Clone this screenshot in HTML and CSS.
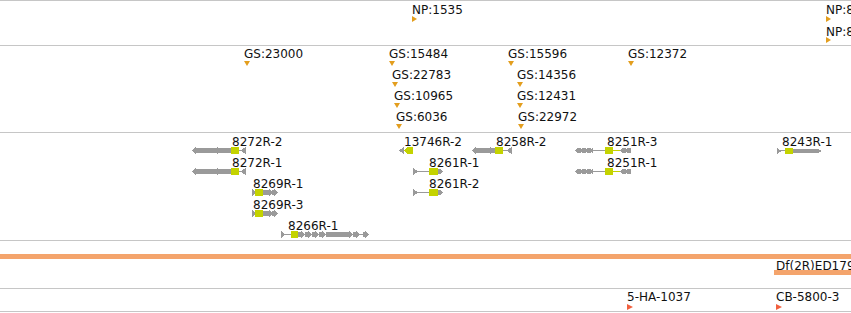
FILE: index.html
```html
<!DOCTYPE html>
<html lang="en">
<head>
<meta charset="UTF-8">
<title>Genome browser tracks</title>
<link rel="stylesheet" href="styles.css">
</head>
<body>

<div class="browser">
    <!-- NP track -->
    <div class="track track-np">
        <div class="lbl" style="left:412px;top:2px">NP:1535</div>
        <div class="mark-r gold" style="left:412px;top:15px"></div>
        <div class="lbl" style="left:826px;top:2px">NP:8491</div>
        <div class="mark-r gold" style="left:826px;top:15px"></div>
        <div class="lbl" style="left:826px;top:24px">NP:8512</div>
        <div class="mark-r gold" style="left:826px;top:36px"></div>
    </div>

    <!-- GS track -->
    <div class="track track-gs">
        <div class="lbl" style="left:244px;top:1px">GS:23000</div>
        <div class="mark-d" style="left:244px;top:15px"></div>

        <div class="lbl" style="left:389px;top:1px">GS:15484</div>
        <div class="mark-d" style="left:389px;top:15px"></div>
        <div class="lbl" style="left:392px;top:22px">GS:22783</div>
        <div class="mark-d" style="left:392px;top:36px"></div>
        <div class="lbl" style="left:394px;top:43px">GS:10965</div>
        <div class="mark-d" style="left:394px;top:57px"></div>
        <div class="lbl" style="left:396px;top:64px">GS:6036</div>
        <div class="mark-d" style="left:396px;top:78px"></div>

        <div class="lbl" style="left:508px;top:1px">GS:15596</div>
        <div class="mark-d" style="left:508px;top:15px"></div>
        <div class="lbl" style="left:517px;top:22px">GS:14356</div>
        <div class="mark-d" style="left:517px;top:36px"></div>
        <div class="lbl" style="left:517px;top:43px">GS:12431</div>
        <div class="mark-d" style="left:517px;top:57px"></div>
        <div class="lbl" style="left:518px;top:64px">GS:22972</div>
        <div class="mark-d" style="left:518px;top:78px"></div>

        <div class="lbl" style="left:628px;top:1px">GS:12372</div>
        <div class="mark-d" style="left:628px;top:15px"></div>
    </div>

    <!-- transcripts -->
    <div class="track track-tx">
        <div class="lbl" style="left:232px;top:2px">8272R-2</div>
        <svg class="glyph" style="left:192px;top:14px" width="54" height="7">
            <polygon class="ex" points="0,3.5 4,0 4,1 24,1 24,6 4,6 4,7"/>
            <polygon class="ex" points="22,3.5 26,0 26,1 39,1 39,6 26,6 26,7"/>
            <rect class="cds" x="39" y="0" width="8" height="7"/>
            <rect class="ex" x="47" y="3" width="2" height="1"/>
            <polygon class="ex" points="48,3.5 54,0 54,7"/>
        </svg>

        <div class="lbl" style="left:232px;top:23px">8272R-1</div>
        <svg class="glyph" style="left:192px;top:35px" width="54" height="7">
            <polygon class="ex" points="0,3.5 4,0 4,1 24,1 24,6 4,6 4,7"/>
            <polygon class="ex" points="22,3.5 26,0 26,1 39,1 39,6 26,6 26,7"/>
            <rect class="cds" x="39" y="0" width="8" height="7"/>
            <rect class="ex" x="47" y="3" width="2" height="1"/>
            <polygon class="ex" points="48,3.5 54,0 54,7"/>
        </svg>

        <div class="lbl" style="left:253px;top:44px">8269R-1</div>
        <svg class="glyph" style="left:252px;top:56px" width="26" height="7">
            <rect class="ex" x="0" y="0" width="1" height="7"/>
            <polygon class="ex" points="1,1 4,3.5 1,6"/>
            <rect class="cds" x="3" y="0" width="8" height="7"/>
            <polygon class="ex" points="11,1 17,1 17,0 21,3.5 17,7 17,6 11,6"/>
            <polygon class="ex" points="20,1 22,1 22,0 26,3.5 22,7 22,6 20,6"/>
        </svg>

        <div class="lbl" style="left:253px;top:65px">8269R-3</div>
        <svg class="glyph" style="left:252px;top:77px" width="26" height="7">
            <rect class="ex" x="0" y="0" width="1" height="7"/>
            <polygon class="ex" points="1,1 4,3.5 1,6"/>
            <rect class="cds" x="3" y="0" width="8" height="7"/>
            <polygon class="ex" points="11,1 17,1 17,0 21,3.5 17,7 17,6 11,6"/>
            <polygon class="ex" points="20,1 22,1 22,0 26,3.5 22,7 22,6 20,6"/>
        </svg>

        <div class="lbl" style="left:288px;top:86px">8266R-1</div>
        <svg class="glyph" style="left:281px;top:98px" width="88" height="7">
            <rect class="ex" x="0" y="0" width="1" height="7"/>
            <polygon class="ex" points="1,1 5,3.5 1,6"/>
            <rect class="ex" x="5" y="3" width="5" height="1"/>
            <rect class="cds" x="10" y="0" width="7" height="7"/>
            <polygon class="ex" points="17,1 20,1 20,0 24,3.5 20,7 20,6 17,6"/>
            <polygon class="ex" points="24,1 27,1 27,0 31,3.5 27,7 27,6 24,6"/>
            <polygon class="ex" points="31,1 34,1 34,0 38,3.5 34,7 34,6 31,6"/>
            <polygon class="ex" points="38,1 41,1 41,0 45,3.5 41,7 41,6 38,6"/>
            <rect class="ex" x="45" y="1" width="20" height="5"/>
            <polygon class="ex" points="65,1 68,1 68,0 72,3.5 68,7 68,6 65,6"/>
            <polygon class="ex" points="72,1 75,1 75,0 79,3.5 75,7 75,6 72,6"/>
            <rect class="ex" x="79" y="3" width="3" height="1"/>
            <polygon class="ex" points="82,1 84,1 84,0 88,3.5 84,7 84,6 82,6"/>
        </svg>

        <div class="lbl" style="left:404px;top:2px">13746R-2</div>
        <svg class="glyph" style="left:399px;top:14px" width="14" height="7">
            <polygon class="ex" points="0,3.5 5,0 5,7"/>
            <polygon class="cds" points="5,3.5 8,0 14,0 14,7 8,7"/>
        </svg>

        <div class="lbl" style="left:496px;top:2px">8258R-2</div>
        <svg class="glyph" style="left:472px;top:14px" width="41" height="7">
            <polygon class="ex" points="0,3.5 4,0 4,1 18,1 18,6 4,6 4,7"/>
            <polygon class="ex" points="15,3.5 19,0 19,1 23,1 23,6 19,6 19,7"/>
            <rect class="cds" x="23" y="0" width="8" height="7"/>
            <rect class="ex" x="31" y="3" width="3" height="1"/>
            <polygon class="ex" points="34,3.5 40,0 40,7"/>
        </svg>

        <div class="lbl" style="left:429px;top:23px">8261R-1</div>
        <svg class="glyph" style="left:413px;top:35px" width="31" height="7">
            <polygon class="ex" points="0,0 5,3.5 0,7"/>
            <rect class="ex" x="4" y="3" width="12" height="1"/>
            <rect class="cds" x="16" y="0" width="9" height="7"/>
            <polygon class="ex" points="25,1 27,1 30,3.5 27,6 25,6"/>
        </svg>

        <div class="lbl" style="left:429px;top:44px">8261R-2</div>
        <svg class="glyph" style="left:413px;top:56px" width="31" height="7">
            <polygon class="ex" points="0,0 5,3.5 0,7"/>
            <rect class="ex" x="4" y="3" width="12" height="1"/>
            <rect class="cds" x="16" y="0" width="9" height="7"/>
            <polygon class="ex" points="25,1 27,1 30,3.5 27,6 25,6"/>
        </svg>

        <div class="lbl" style="left:607px;top:2px">8251R-3</div>
        <svg class="glyph" style="left:575px;top:14px" width="56" height="7">
            <polygon class="ex" points="0,3.5 3,0 3,1 6,1 6,6 3,6 3,7"/>
            <polygon class="ex" points="5,3.5 8,0 8,1 11,1 11,6 8,6 8,7"/>
            <polygon class="ex" points="10,3.5 13,0 13,1 16,1 16,6 13,6 13,7"/>
            <polygon class="ex" points="15,3.5 18,0 18,7"/>
            <rect class="ex" x="18" y="3" width="12" height="1"/>
            <rect class="cds" x="30" y="0" width="8" height="7"/>
            <rect class="cds" x="38" y="3" width="7" height="1"/>
            <polygon class="ex" points="45,3.5 48,0 48,1 51,1 51,6 48,6 48,7"/>
            <polygon class="ex" points="50,3.5 53,0 53,1 56,1 56,6 53,6 53,7"/>
        </svg>

        <div class="lbl" style="left:607px;top:23px">8251R-1</div>
        <svg class="glyph" style="left:575px;top:35px" width="56" height="7">
            <polygon class="ex" points="0,3.5 3,0 3,1 6,1 6,6 3,6 3,7"/>
            <polygon class="ex" points="5,3.5 8,0 8,1 11,1 11,6 8,6 8,7"/>
            <polygon class="ex" points="10,3.5 13,0 13,1 16,1 16,6 13,6 13,7"/>
            <polygon class="ex" points="15,3.5 18,0 18,7"/>
            <rect class="ex" x="18" y="3" width="12" height="1"/>
            <rect class="cds" x="30" y="0" width="8" height="7"/>
            <rect class="cds" x="38" y="3" width="7" height="1"/>
            <polygon class="ex" points="45,3.5 48,0 48,1 51,1 51,6 48,6 48,7"/>
            <polygon class="ex" points="50,3.5 53,0 53,1 56,1 56,6 53,6 53,7"/>
        </svg>

        <div class="lbl" style="left:782px;top:2px">8243R-1</div>
        <svg class="glyph" style="left:777px;top:15px" width="46" height="6">
            <polygon class="ex" points="0,0 5,3 0,6"/>
            <rect class="ex" x="4" y="2" width="4" height="1"/>
            <rect class="cds" x="8" y="0" width="8" height="6"/>
            <polygon class="ex" points="16,1 41,1 45,3 41,5 16,5"/>
        </svg>
    </div>

    <!-- deficiencies -->
    <div class="track track-df">
        <div class="bar" style="left:0;top:13px;width:851px"></div>
        <div class="lbl" style="left:776px;top:18px">Df(2R)ED1791</div>
        <div class="bar" style="left:774px;top:29px;width:77px"></div>
    </div>

    <!-- insertions -->
    <div class="track track-ins">
        <div class="lbl" style="left:627px;top:1px">5-HA-1037</div>
        <div class="mark-r red" style="left:627px;top:15px"></div>
        <div class="lbl" style="left:776px;top:1px">CB-5800-3</div>
        <div class="mark-r red" style="left:776px;top:15px"></div>
    </div>
</div>

</body>
</html>
```

FILE: styles.css
```css
body {
    margin: 0;
    background: #fff;
    font-family: "DejaVu Sans", Verdana, sans-serif;
    font-size: 12px;
    color: #111;
}

.browser {
    width: 851px;
    overflow: hidden;
    border-top: 1px solid #c6c6c6;
}

/* each track is a strip of the canvas, features sit at their coordinates */
.track {
    position: relative;
    border-bottom: 1px solid #c6c6c6;
    overflow: hidden;
}

.track-np { height: 44px; }
.track-gs { height: 86px; }
.track-tx { height: 107px; }
.track-df { height: 47px; }
.track-ins { height: 22px; }

.lbl {
    position: absolute;
    line-height: 14px;
    white-space: nowrap;
}

.glyph {
    position: absolute;
    display: block;
    shape-rendering: crispEdges;
}

.ex { fill: #9a9a9a; }
.cds { fill: #c4d300; }

/* point markers */
.mark-d {
    position: absolute;
    width: 0;
    height: 0;
    border-left: 3px solid transparent;
    border-right: 3px solid transparent;
    border-top: 5px solid #e39e1e;
}

.mark-r {
    position: absolute;
    width: 0;
    height: 0;
    border-top: 3px solid transparent;
    border-bottom: 3px solid transparent;
    border-left: 5px solid #e39e1e;
}

.mark-r.red {
    border-left: 6px solid #f2603e;
}

.bar {
    position: absolute;
    height: 5px;
    background: #f4a46c;
}
```
